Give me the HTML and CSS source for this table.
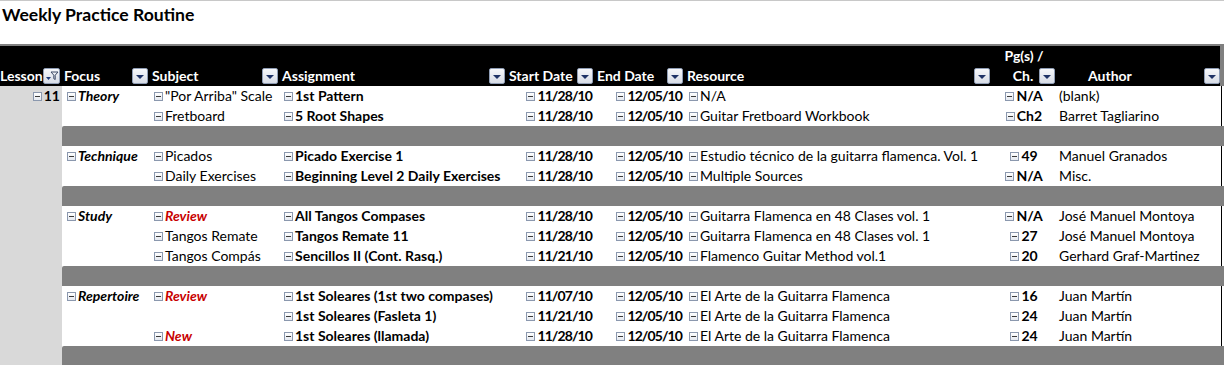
FILE: index.html
```html
<!DOCTYPE html>
<html>
<head>
<meta charset="utf-8">
<link rel="stylesheet" href="styles.css">
</head>
<body>
<div class="sheet">
  <div class="title">Weekly Practice Routine</div>
  <div class="head">
    <div class="hc c1 r1"></div><div class="hc c2 r1"></div><div class="hc c3 r1"></div><div class="hc c4 r1"></div><div class="hc c5 r1"></div><div class="hc c6 r1"></div><div class="hc c7 r1"></div>
    <div class="hc c8 r1 center">Pg(s) /</div>
    <div class="hc c9 r1"></div>

    <div class="hc"><span class="hl">Lesson</span><span class="btn filt"><svg width="15" height="14" viewBox="0 0 15 14"><path d="M2 8h5l-2.5 3z" fill="#1f3a78"/><path d="M7 3h7l-2.8 3.2v4.3l-1.4-0.8V6.2z" fill="none" stroke="#3c4a66" stroke-width="1"/></svg></span></div>
    <div class="hc"><span class="hl">Focus</span><span class="btn"><i class="tri"></i></span></div>
    <div class="hc"><span class="hl">Subject</span><span class="btn"><i class="tri"></i></span></div>
    <div class="hc"><span class="hl">Assignment</span><span class="btn"><i class="tri"></i></span></div>
    <div class="hc"><span class="hl">Start Date</span><span class="btn"><i class="tri"></i></span></div>
    <div class="hc"><span class="hl">End Date</span><span class="btn"><i class="tri"></i></span></div>
    <div class="hc"><span class="hl">Resource</span><span class="btn"><i class="tri"></i></span></div>
    <div class="hc pgh"><span class="hl">Ch.</span><span class="btn"><i class="tri"></i></span></div>
    <div class="hc authh"><span class="hl">Author</span><span class="btn"><i class="tri"></i></span></div>
  </div>

  <div class="body">
    <div class="lesson"><span class="m"></span><b>11</b></div>

    <!-- Theory -->
    <div class="cell focus"><span class="m"></span><b><i>Theory</i></b></div>
    <div class="cell"><span class="m"></span>"Por Arriba" Scale</div>
    <div class="cell b"><span class="m"></span>1st Pattern</div>
    <div class="cell b r"><span class="m"></span><span class="d">11/28/10</span></div>
    <div class="cell b r"><span class="m"></span><span class="d">12/05/10</span></div>
    <div class="cell"><span class="m"></span>N/A</div>
    <div class="cell b pg"><span class="m"></span>N/A</div>
    <div class="cell auth">(blank)</div>

    <div class="cell focus"></div>
    <div class="cell"><span class="m"></span>Fretboard</div>
    <div class="cell b"><span class="m"></span>5 Root Shapes</div>
    <div class="cell b r"><span class="m"></span><span class="d">11/28/10</span></div>
    <div class="cell b r"><span class="m"></span><span class="d">12/05/10</span></div>
    <div class="cell"><span class="m"></span>Guitar Fretboard Workbook</div>
    <div class="cell b pg"><span class="m"></span>Ch2</div>
    <div class="cell auth">Barret Tagliarino</div>

    <div class="band"></div>

    <!-- Technique -->
    <div class="cell focus"><span class="m"></span><b><i>Technique</i></b></div>
    <div class="cell"><span class="m"></span>Picados</div>
    <div class="cell b"><span class="m"></span>Picado Exercise 1</div>
    <div class="cell b r"><span class="m"></span><span class="d">11/28/10</span></div>
    <div class="cell b r"><span class="m"></span><span class="d">12/05/10</span></div>
    <div class="cell"><span class="m"></span>Estudio técnico de la guitarra flamenca. Vol. 1</div>
    <div class="cell b pg"><span class="m"></span>49</div>
    <div class="cell auth">Manuel Granados</div>

    <div class="cell focus"></div>
    <div class="cell"><span class="m"></span>Daily Exercises</div>
    <div class="cell b"><span class="m"></span>Beginning Level 2 Daily Exercises</div>
    <div class="cell b r"><span class="m"></span><span class="d">11/28/10</span></div>
    <div class="cell b r"><span class="m"></span><span class="d">12/05/10</span></div>
    <div class="cell"><span class="m"></span>Multiple Sources</div>
    <div class="cell b pg"><span class="m"></span>N/A</div>
    <div class="cell auth">Misc.</div>

    <div class="band"></div>

    <!-- Study -->
    <div class="cell focus"><span class="m"></span><b><i>Study</i></b></div>
    <div class="cell"><span class="m"></span><span class="red">Review</span></div>
    <div class="cell b"><span class="m"></span>All Tangos Compases</div>
    <div class="cell b r"><span class="m"></span><span class="d">11/28/10</span></div>
    <div class="cell b r"><span class="m"></span><span class="d">12/05/10</span></div>
    <div class="cell"><span class="m"></span>Guitarra Flamenca en 48 Clases vol. 1</div>
    <div class="cell b pg"><span class="m"></span>N/A</div>
    <div class="cell auth">José Manuel Montoya</div>

    <div class="cell focus"></div>
    <div class="cell"><span class="m"></span>Tangos Remate</div>
    <div class="cell b"><span class="m"></span>Tangos Remate 11</div>
    <div class="cell b r"><span class="m"></span><span class="d">11/28/10</span></div>
    <div class="cell b r"><span class="m"></span><span class="d">12/05/10</span></div>
    <div class="cell"><span class="m"></span>Guitarra Flamenca en 48 Clases vol. 1</div>
    <div class="cell b pg"><span class="m"></span>27</div>
    <div class="cell auth">José Manuel Montoya</div>

    <div class="cell focus"></div>
    <div class="cell"><span class="m"></span>Tangos Compás</div>
    <div class="cell b"><span class="m"></span>Sencillos II (Cont. Rasq.)</div>
    <div class="cell b r"><span class="m"></span><span class="d">11/21/10</span></div>
    <div class="cell b r"><span class="m"></span><span class="d">12/05/10</span></div>
    <div class="cell"><span class="m"></span>Flamenco Guitar Method vol.1</div>
    <div class="cell b pg"><span class="m"></span>20</div>
    <div class="cell auth">Gerhard Graf-Martinez</div>

    <div class="band"></div>

    <!-- Repertoire -->
    <div class="cell focus"><span class="m"></span><b><i>Repertoire</i></b></div>
    <div class="cell"><span class="m"></span><span class="red">Review</span></div>
    <div class="cell b"><span class="m"></span>1st Soleares (1st two compases)</div>
    <div class="cell b r"><span class="m"></span><span class="d">11/07/10</span></div>
    <div class="cell b r"><span class="m"></span><span class="d">12/05/10</span></div>
    <div class="cell"><span class="m"></span>El Arte de la Guitarra Flamenca</div>
    <div class="cell b pg"><span class="m"></span>16</div>
    <div class="cell auth">Juan Martín</div>

    <div class="cell focus"></div>
    <div class="cell"></div>
    <div class="cell b"><span class="m"></span>1st Soleares (Fasleta 1)</div>
    <div class="cell b r"><span class="m"></span><span class="d">11/21/10</span></div>
    <div class="cell b r"><span class="m"></span><span class="d">12/05/10</span></div>
    <div class="cell"><span class="m"></span>El Arte de la Guitarra Flamenca</div>
    <div class="cell b pg"><span class="m"></span>24</div>
    <div class="cell auth">Juan Martín</div>

    <div class="cell focus"></div>
    <div class="cell"><span class="m"></span><span class="red">New</span></div>
    <div class="cell b"><span class="m"></span>1st Soleares (llamada)</div>
    <div class="cell b r"><span class="m"></span><span class="d">11/28/10</span></div>
    <div class="cell b r"><span class="m"></span><span class="d">12/05/10</span></div>
    <div class="cell"><span class="m"></span>El Arte de la Guitarra Flamenca</div>
    <div class="cell b pg"><span class="m"></span>24</div>
    <div class="cell auth">Juan Martín</div>

    <div class="band"></div>
  </div>
</div>
</body>
</html>
```

FILE: styles.css
```css
* { box-sizing: border-box; }
html, body { margin: 0; padding: 0; background: #fff; }
body { width: 1224px; height: 365px; overflow: hidden; }

.sheet {
  font-family: Lato, "Open Sans", sans-serif;
  font-size: 14px;
  color: #000;
  border-top: 1px solid #c8c8c8;
  height: 365px;
  overflow: hidden;
}

.title {
  height: 43px;
  padding: 4px 0 0 2px;
  font-size: 17.6px;
  font-weight: 700;
  line-height: 20px;
}

.head {
  display: grid;
  grid-template-columns: 62px 88px 130px 227px 88px 90px 307px 64px 1fr;
  grid-template-rows: 20px 20px;
  background: #000;
  border-top: 2px solid #808080;
  border-right: 4px solid #808080;
  color: #fff;
  font-weight: 700;
}
.hc {
  display: flex;
  align-items: center;
  justify-content: space-between;
  padding: 0 2px 0 2px;
  white-space: nowrap;
  line-height: 20px;
}
.hc:nth-child(10) { padding-left: 0; }
.hc.center { justify-content: center; padding-top: 2px; }
.hc.r1 { padding: 0; }
.pgh { justify-content: center; gap: 6px; padding-left: 22px; }
.authh { justify-content: flex-start; padding-left: 32px; padding-right: 0; }
.authh .btn { margin-left: auto; }

.btn {
  width: 16px;
  height: 16px;
  flex: none;
  border: 1px solid #8f9db5;
  border-radius: 2px;
  background: linear-gradient(#f7f8fb, #d7dce6);
  display: flex;
  align-items: center;
  justify-content: center;
}
.btn .tri {
  width: 0; height: 0;
  border-left: 4px solid transparent;
  border-right: 4px solid transparent;
  border-top: 4px solid #1f3366;
  margin-top: 1px;
}
.filt { width: 17px; }

.body {
  display: grid;
  grid-template-columns: 62px 88px 130px 227px 88px 90px 307px 64px 1fr;
  grid-template-rows: repeat(14, 20px);
}
.lesson {
  grid-column: 1;
  grid-row: 1 / span 14;
  background: #d9d9d9;
  display: flex;
  align-items: flex-start;
  justify-content: flex-end;
  padding: 0 2px 0 0;
  line-height: 20px;
}
.lesson .m { margin-top: 6px; }
.cell {
  display: flex;
  align-items: center;
  white-space: nowrap;
  line-height: 20px;
  padding-left: 4px;
  overflow: hidden;
}
.cell.focus { grid-column: 2; padding-left: 5px; }
.cell.b { font-weight: 700; }
.cell.r { justify-content: flex-end; padding-right: 3px; }
.cell.pg { justify-content: center; padding-left: 0; }
.cell.auth { padding-left: 3px; border-right: 1px solid #000; margin-right: 2px; }
.d { letter-spacing: -0.9px; }
.red { color: #c80000; font-weight: 700; font-style: italic; }

.band {
  grid-column: 2 / -1;
  background: #808080;
  border-top-left-radius: 2px;
}

.m {
  flex: none;
  width: 9px;
  height: 9px;
  margin-right: 2px;
  border: 1px solid #8b98ae;
  background: linear-gradient(#ffffff, #e4e8ef);
  position: relative;
}
.m::after {
  content: "";
  position: absolute;
  left: 1px; right: 1px; top: 3px;
  height: 1px;
  background: #3a3a3a;
}
```
